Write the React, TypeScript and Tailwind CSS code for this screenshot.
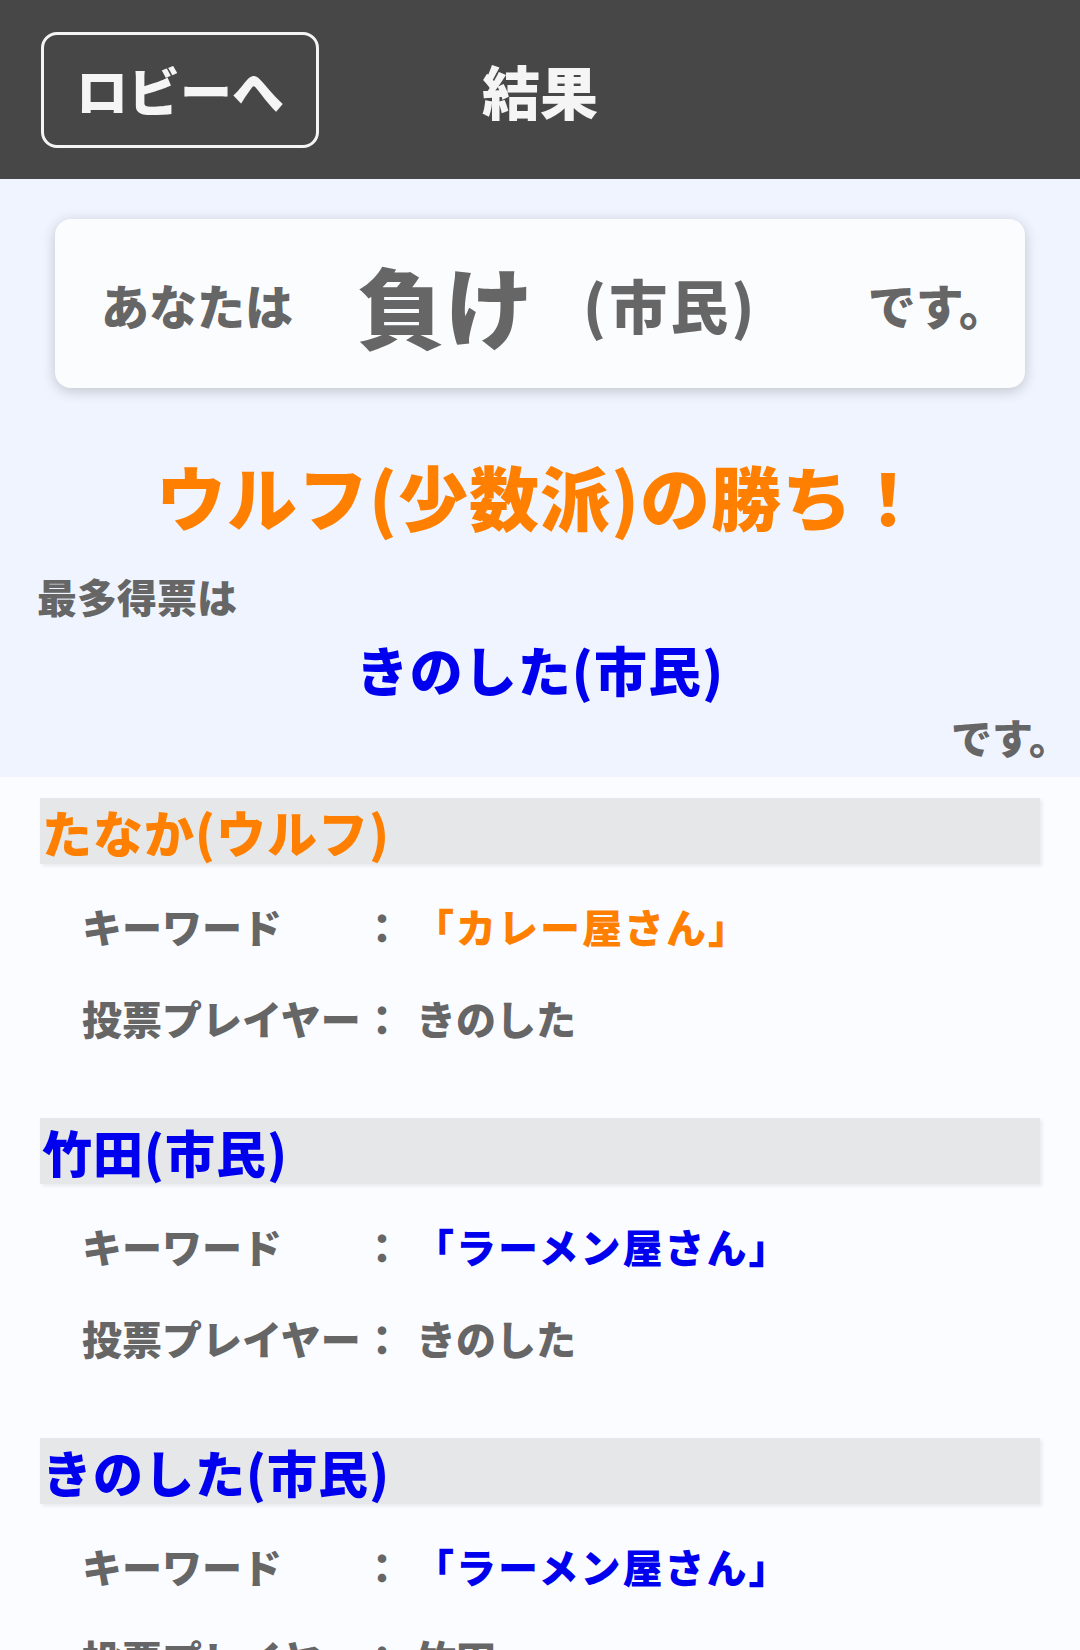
const players = [
  { name: 'たなか(ウルフ)', wolf: true, keyword: '「カレー屋さん」', voter: 'きのした' },
  { name: '竹田(市民)', wolf: false, keyword: '「ラーメン屋さん」', voter: 'きのした' },
  { name: 'きのした(市民)', wolf: false, keyword: '「ラーメン屋さん」', voter: '竹田' },
];

const App = () => {
  return (
    <div className="min-h-screen bg-[#fafcff] font-['Noto_Sans_CJK_JP',sans-serif] font-black text-[#666666]">
      {/* header */}
      <header className="h-[179px] bg-[#474747] grid grid-cols-[1fr_auto_1fr] items-center px-[41px]">
        <button className="w-[278px] h-[116px] border-[3px] border-[#f5f5f5] rounded-[16px] text-[#f5f5f5] text-[52px] leading-none">
          ロビーへ
        </button>
        <h1 className="text-[#f5f5f5] text-[58px] leading-none">結果</h1>
        <div />
      </header>

      {/* summary */}
      <section className="bg-[#eff4fe] pt-[40px] pb-[18px]">
        <div className="mx-[55px] h-[169px] rounded-[16px] bg-[#fbfcfe] shadow-[0_3px_14px_rgba(0,0,0,0.2)] flex items-center pl-[46px] pr-[18px]">
          <span className="text-[48px] leading-none">あなたは</span>
          <span className="ml-[64px] text-[88px] leading-none">負け</span>
          <span className="ml-[50px] text-[58px] leading-none tracking-[3px]">(市民)</span>
          <span className="ml-auto text-[48px] leading-none">です。</span>
        </div>

        <p className="mt-[67px] text-center text-[70px] leading-[82px] tracking-[1px] text-[#ff8000]">ウルフ(少数派)の勝ち！</p>
        <p className="mt-[36px] px-[37px] text-[40px] leading-[46px]">最多得票は</p>
        <p className="mt-[19px] text-center text-[53px] leading-[62px] tracking-[1px] text-[#0000ee]">きのした(市民)</p>
        <p className="mt-[13px] pr-[10px] text-right text-[41px] leading-[46px]">です。</p>
      </section>

      {/* players */}
      <div className="pt-[21px]">
        {players.map((p, i) => (
          <div key={i} className="pb-[77px]">
            <div className="mx-[40px] h-[66px] bg-[#e6e7e9] shadow-[2px_2px_4px_rgba(0,0,0,0.08)] flex items-center px-[2px]">
              <span className={`text-[50px] leading-none tracking-[1px] ${p.wolf ? 'text-[#ff8000]' : 'text-[#0000ee]'}`}>{p.name}</span>
            </div>
            <div className="mt-[39px] px-[82px] flex text-[40px] leading-[46px]">
              <span className="w-[280px]">キーワード</span>
              <span>：</span>
              <span className={`ml-[12px] tracking-[2px] ${p.wolf ? 'text-[#ff8000]' : 'text-[#0000ee]'}`}>{p.keyword}</span>
            </div>
            <div className="mt-[46px] px-[82px] flex text-[40px] leading-[46px]">
              <span className="w-[280px]">投票プレイヤー</span>
              <span>：</span>
              <span className="ml-[14px]">{p.voter}</span>
            </div>
          </div>
        ))}
      </div>
    </div>
  );
};

export default App;
